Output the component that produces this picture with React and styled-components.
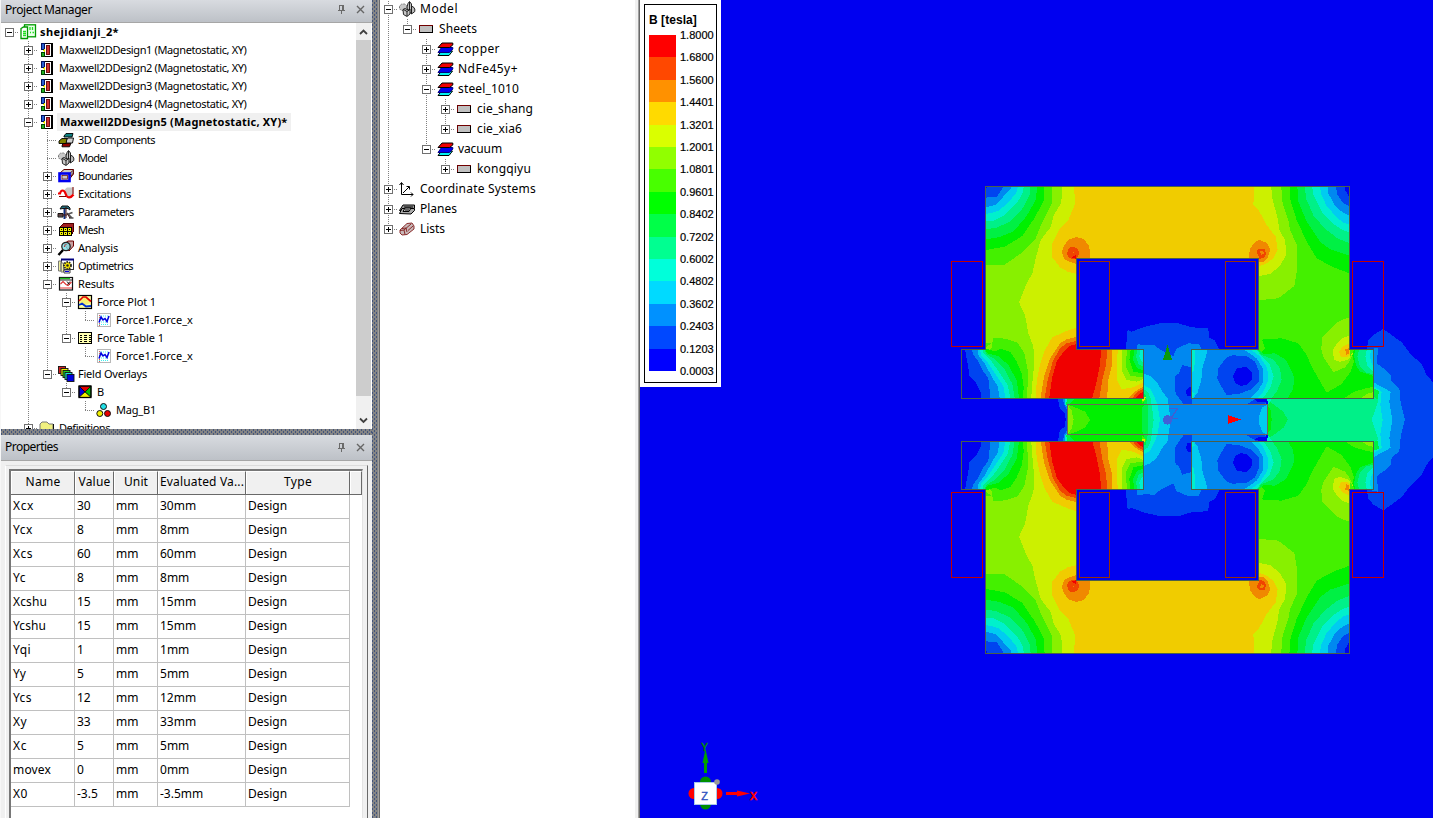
import React, { useLayoutEffect, useRef, useState } from "react";
import styled, { createGlobalStyle } from "styled-components";

const UI = `"Noto Sans", "Open Sans", "Liberation Sans", sans-serif`;
const ARIAL = `"Liberation Sans", Arial, sans-serif`;

const Global = createGlobalStyle`
  * { box-sizing: border-box; }
  html, body { margin: 0; padding: 0; overflow: hidden; background: #f0f0f0; }
  body { font-family: ${UI}; font-size: 12px; color: #000; }
`;

const dither = `
  background-color: #858585;
  background-image:
    conic-gradient(from 0deg at 1px 2px, transparent 270deg, #43557c 0),
    conic-gradient(from 0deg at 1px 2px, transparent 270deg, #43557c 0);
  background-size: 4px 4px;
  background-position: 0 0, 2px 2px;
`;

const Window = styled.div`
  display: flex;
  width: 1433px;
  height: 818px;
  overflow: hidden;
`;
const Dock = styled.div`
  display: flex;
  flex-direction: column;
  width: 372px;
  border-left: 1px solid #f7f7f7;
  flex: none;
`;
const Splitter = styled.div`
  flex: none;
  ${dither}
  ${(p) => (p.$vertical ? "width: 6px;" : "height: 6px;")}
`;
const Edge = styled.div`
  width: ${(p) => p.$w || 1}px;
  background: ${(p) => p.$c};
  flex: none;
`;
const TitleBar = styled.div`
  display: flex;
  align-items: center;
  flex: none;
  height: ${(p) => p.$h}px;
  padding: ${(p) => p.$top || 0}px 6px ${(p) => p.$bottom}px 4px;
  background: linear-gradient(#d8dbe0, #bdc1c7);
  border-bottom: 1px solid #a6a6a6;
  color: #1b1b1b;
`;
const Spacer = styled.div`flex: 1;`;
const TitleIcon = styled.svg`
  width: 11px;
  height: 11px;
  margin-left: 8px;
  flex: none;
`;
const TreePane = styled.div`
  display: flex;
  height: 406px;
  flex: none;
  background: #fff;
  overflow: hidden;
`;
const Tree = styled.div`
  flex: 1;
  min-width: 0;
  margin-left: -1px;
  margin-top: ${(p) => p.$shift || 0}px;
`;
const Row = styled.div`
  display: flex;
  align-items: center;
  height: ${(p) => p.$h}px;
`;
const vert = "repeating-linear-gradient(#808080 0 1px, transparent 1px 2px)";
const horiz = "repeating-linear-gradient(90deg, #808080 0 1px, transparent 1px 2px)";
const Guide = styled.div`
  width: 19px;
  height: 100%;
  flex: none;
  display: flex;
  align-items: center;
  padding: 1px 0 0 5px;
  background-repeat: no-repeat;
  background-image: ${(p) => (p.$k === " " ? "none" : p.$k === "|" ? vert : p.$k === "r" ? horiz : `${vert}, ${horiz}`)};
  background-size: ${(p) => (p.$k === "|" ? "1px 100%" : p.$k === "r" ? "10px 1px" : `1px ${p.$k === "L" ? "55%" : "100%"}, 10px 1px`)};
  background-position: ${(p) => (p.$k === "|" ? "9px 0" : p.$k === "r" ? "9px 55%" : "9px 0, 9px 55%")};
`;
const Box = styled.svg`
  width: 9px;
  height: 9px;
  flex: none;
`;
const IconBox = styled.svg`
  width: 17px;
  height: 16px;
  margin: 0 ${(p) => p.$gap}px 0 1px;
  flex: none;
  overflow: visible;
`;
const Label = styled.span`
  display: inline-block;
  white-space: pre;
  line-height: 16px;
  font-size: ${(p) => p.$size || 12}px;
  font-weight: ${(p) => (p.$bold ? 700 : 400)};
  color: ${(p) => p.$color || "#000"};
`;
const Selected = styled.span`
  display: flex;
  align-items: center;
  height: 18px;
  padding: 0 3px 0 3px;
  margin-left: -2px;
  background: #f0f0f0;
`;

function Fit({ w, children, ...rest }) {
  const ref = useRef(null);
  const [gap, setGap] = useState(0);
  useLayoutEffect(() => {
    const natural = ref.current.getBoundingClientRect().width;
    if (w) setGap((w - natural) / children.length);
  }, [w, children]);
  return (
    <Label ref={ref} style={{ letterSpacing: `${gap}px` }} {...rest}>
      {children}
    </Label>
  );
}

function Expander({ open }) {
  return (
    <Box viewBox="0 0 9 9" shapeRendering="crispEdges">
      <rect x="0.5" y="0.5" width="8" height="8" fill="#fff" stroke="#707070" />
      <path d={open ? "M2 4.5H7" : "M2 4.5H7M4.5 2V7"} stroke="#000" />
    </Box>
  );
}

const hex = (
  <g>
    <path d="M.5 5.500 2.500 3H6L8 5V9L6 9.500H3L.5 8Z" fill="#c8c8c8" stroke="#777" strokeDasharray="1.500 1" />
    <path d="M8 6 9 2.500 10.500 .5 12.500 3V12H9Z" fill="#c4c4c4" stroke="#111" strokeWidth="0.900" />
    <path d="M12.500 6 14 5.500 15.800 8V10.500L12.500 13Z" fill="#bdbdbd" stroke="#111" strokeWidth="0.900" />
    <path d="M4 8.500 6 7.500 9 9 11 8V13L8 15.500 4.500 13.500Z" fill="#c8c8c8" stroke="#111" strokeWidth="0.900" />
    <path d="M4.500 8.500 8 10.500V15M8 10.500 11 8.500M10.500 1V9" stroke="#111" strokeWidth="0.900" fill="none" />
  </g>
);
const layers = (
  <g strokeWidth="1">
    <path d="M1 14.500 4.500 10H15.500L12 14.500Z" fill="#00f0f0" stroke="#000" />
    <path d="M1 11.500 4.500 6.500H15.800V8L12.500 11.500Z" fill="#0000f0" stroke="#000080" />
    <path d="M1 6.500 5 2H15.800V4L12.500 6.500Z" fill="#f00000" stroke="#000" />
  </g>
);
const plotCurve = (
  <g>
    <rect x="1.500" y="1.500" width="13" height="13" fill="#fff" stroke="#b8b8b8" />
    <path d="M3 4H13M3 7H13M3 10H13M3 12.500H13" stroke="#40f0f0" strokeDasharray="1 1" />
    <path d="M3.500 3V14" stroke="#f05050" strokeDasharray="1 1" />
    <path d="M3 10.500 5 5 7 8 9 6.500 11 9.500 13 4" stroke="#0000e0" strokeWidth="1.500" fill="none" />
  </g>
);
const ICONS = {
  project: (
    <g stroke="#009a00" strokeWidth="1.300">
      <rect x="4.500" y="0.800" width="11" height="12" fill="#e8ffe8" />
      <path d="M1 4.500 3.500 3H7.500V14.500H1Z" fill="#fff" />
      <path d="M3 7.500H6M3 9.500H6M3 11.500H6M10 3V6M12.500 3V6M10 8.500H11M12.500 8.500H14" stroke="#20e020" />
    </g>
  ),
  design: (
    <g shapeRendering="crispEdges">
      <rect x="2" y="1" width="3" height="6" fill="#2860d0" stroke="#001060" />
      <rect x="2" y="10" width="3" height="4" fill="#20b020" stroke="#004000" />
      <path d="M3 9 6 6 7 10Z" fill="#f0f000" />
      <path d="M6 1.500H13.500V14.500H6" fill="#fff" stroke="#000" />
      <path d="M12.500 1V15" stroke="#000" />
      <rect x="7.500" y="3.500" width="3" height="9" fill="#d03030" stroke="#701010" />
    </g>
  ),
  comps: (
    <g stroke="#000" strokeWidth="0.900">
      <path d="M6 4 8 1.500H15L14 5H6Z" fill="#108080" />
      <path d="M4 14 5 11H13L11.500 14.800H4Z" fill="#900000" />
      <path d="M8 11V8.500L10 6H15.500L14.500 11Z" fill="#d0d0d0" />
      <path d="M1 11.500V9L4 6.500H9L8 11.500Z" fill="#808000" />
    </g>
  ),
  model: hex,
  boundary: (
    <g>
      <path d="M2 5 6 1.500H15.500V6L11.500 11" fill="#c8c8c8" stroke="#600000" />
      <path d="M13 8 15.500 5V2L11 6Z" fill="#999" stroke="#600000" strokeWidth="0.800" />
      <rect x="1.500" y="5.500" width="10" height="7.500" fill="#e0e0e0" stroke="#0000f0" strokeWidth="2.600" />
      <rect x="4" y="7.500" width="5.500" height="3.500" fill="#c8c8c8" stroke="#600000" strokeWidth="0.700" />
    </g>
  ),
  excite: (
    <g>
      <path d="M5 5 9 1.500H15.500V9L12 12.500 9 9Z" fill="#c8c8c8" />
      <path d="M0 7.500H2C3 3.500 6 3.500 7.500 7.500 9 12.500 12.500 12.500 15.500 8.500" fill="none" stroke="#f00000" strokeWidth="2.200" />
      <path d="M1 10.500H8M15 1V8" stroke="#800000" />
    </g>
  ),
  params: (
    <g stroke="#111">
      <path d="M2 5 4 2H10L12 4V6L10 4.500H5Z" fill="#207080" />
      <path d="M6.500 5V15" stroke="#103080" strokeWidth="2" />
      <path d="M0 9.500H5V13H0Z" fill="#777" />
      <path d="M9 9 14 14M10.500 10 14.500 8.500M11 14H15.500" strokeWidth="1.700" stroke="#555" />
      <path d="M8 3V14M0 11H9M9 9.500 12 14" stroke="#401010" />
    </g>
  ),
  mesh: (
    <g shapeRendering="crispEdges">
      <path d="M2 5 6 1H15V10L13 13" fill="#a02020" stroke="#500000" />
      <rect x="1" y="5" width="13" height="9" fill="#f0f000" />
      <path d="M1.500 5V14M5.500 5V14M9.500 5V14M13.500 5V14M1 5.500H14M1 9.500H14M1 13.500H14" stroke="#000" fill="none" />
      <path d="M3 7H4V8H3ZM7 7H8V8H7ZM11 7H12V8H11ZM3 11H4V12H3ZM7 11H8V12H7ZM11 11H12V12H11Z" fill="#000" />
    </g>
  ),
  analysis: (
    <g>
      <path d="M6 4 10 1H15.500V6L11 11Z" fill="#c8a0a0" stroke="#700000" />
      <circle cx="8" cy="6.500" r="4.200" fill="#80e0e8" fillOpacity="0.800" stroke="#222" strokeWidth="1.300" />
      <path d="M5 10 0.500 15" stroke="#000" strokeWidth="2.500" />
      <path d="M6.500 7A2 2 0 0 1 8.500 4.500" stroke="#b03030" fill="none" />
    </g>
  ),
  opti: (
    <g>
      <rect x="3.500" y="1.500" width="12" height="10" fill="#fff" stroke="#333" />
      <path d="M3 1.500H16" stroke="#000080" strokeWidth="2" />
      <path d="M.5 3H3V13H.5ZM3 5H5.500V14H3Z" fill="#f0f0a0" stroke="#777" />
      <circle cx="9.500" cy="7.500" r="3.500" fill="#f0e000" stroke="#222" strokeDasharray="1.500 1" strokeWidth="1.800" />
      <circle cx="9.500" cy="7.500" r="1.200" fill="#222" />
      <path d="M6 12H12V15H6Z" fill="#fff" stroke="#444" />
      <path d="M7 13.500H11" stroke="#0000e0" />
    </g>
  ),
  results: (
    <g>
      <rect x="1.500" y="1.500" width="13" height="12.500" fill="#fff" stroke="#111" strokeWidth="1.200" />
      <path d="M2 2.500H12" stroke="#20c020" strokeWidth="1.400" />
      <path d="M2 4H14" stroke="#111" strokeWidth="0.900" />
      <path d="M2.500 8 5 5.500 8 8.500 10 9.500 13.500 6" stroke="#e03030" fill="none" strokeWidth="1.100" />
      <path d="M9 5.500 11.500 8.500M12 5.500 9.500 8.500" stroke="#111" />
      <path d="M2 12H14" stroke="#e03030" />
    </g>
  ),
  plot: (
    <g>
      <rect x="1.500" y="1.500" width="13" height="13" fill="#ffffa0" stroke="#000" strokeWidth="1.200" />
      <path d="M4 6 8 3 12 6 14 9 8 11 3 9Z" fill="#f8f070" />
      <path d="M2 7 6 3H9L14 7.500" stroke="#e00000" fill="none" strokeWidth="1.700" />
      <path d="M2 11 5 9.500 9 12.500 14 12" stroke="#0030d0" fill="none" strokeWidth="1.900" />
    </g>
  ),
  curve: plotCurve,
  table: (
    <g shapeRendering="crispEdges">
      <rect x="1.500" y="2.500" width="13" height="11" fill="#ffffb0" stroke="#000" />
      <path d="M5.500 3V13M10.500 3V13M3 5.500H5M3 7.500H5M3 9.500H5M3 11.500H5M7 5.500H10M7 7.500H10M7 9.500H10M7 11.500H10M12 5.500H14M12 7.500H14M12 9.500H14M12 11.500H14" stroke="#000" />
      <path d="M5.500 3V13M10.500 3V13" stroke="#ffffb0" />
    </g>
  ),
  overlays: (
    <g stroke="#111" strokeWidth="0.900">
      <rect x="0.500" y="0.500" width="7" height="7" fill="#d02020" />
      <rect x="3" y="2.500" width="7" height="7" fill="#f0f000" />
      <rect x="5" y="4.500" width="7" height="7" fill="#20d020" />
      <rect x="7" y="6.500" width="7" height="7" fill="#20e0e0" />
      <rect x="9" y="8.500" width="7" height="7" fill="#0000e0" />
    </g>
  ),
  field: (
    <g stroke="#000" strokeWidth="0.700">
      <path d="M2 2H14L8 8Z" fill="#e00000" />
      <path d="M2 2V13L8 8Z" fill="#0000e0" />
      <path d="M14 2V13L8 8Z" fill="#00c000" />
      <path d="M2 13.500H14L8 8Z" fill="#f0f000" />
      <rect x="2" y="2" width="12" height="11.500" fill="none" strokeWidth="1.300" />
    </g>
  ),
  dots: (
    <g stroke="#111">
      <circle cx="7.500" cy="4.500" r="3" fill="#20e0e8" />
      <circle cx="3.800" cy="11.500" r="3" fill="#f0f000" />
      <circle cx="11.500" cy="11.500" r="3" fill="#e80000" />
    </g>
  ),
  folder: (
    <g>
      <path d="M1 15V4L3 2H8L10 4H14V15Z" fill="#f0f080" stroke="#777" />
      <path d="M14.500 4V15" stroke="#111" />
    </g>
  ),
  sheet: (
    <g shapeRendering="crispEdges">
      <rect x="1.500" y="4.500" width="13" height="7" fill="#c0c0c0" stroke="#000" />
      <path d="M1 4.500H15M1.500 4V11" stroke="#700000" />
    </g>
  ),
  layers,
  axes: (
    <g stroke="#000" fill="none">
      <path d="M2.500 2V13.500H14M.5 4 2.500 1.500 4.500 4M12 11.500 14 13.500 12 15.500M4 12 10 6M7.500 5.500H10.500V8.500" />
    </g>
  ),
  planes: (
    <g stroke="#000">
      <path d="M.5 9.500 4 4H15.500V7L12 10Z" fill="#999" />
      <path d="M.5 12.500 3 7.500H15.500V9.500L12 13Z" fill="#aaa" />
      <path d="M4 10.500 6 7H12L10 10.500ZM5 6H14M6 9H10" fill="#ccc" />
    </g>
  ),
  lists: (
    <g stroke="#801818" strokeWidth="0.900">
      <path d="M1 12V9L8 2.500 13 2 15 5V8L8 13.500 3 14Z" fill="#c8b8b8" />
      <path d="M1 9.500 5 9 6 13.500M5 9 12 3M3 7.500 7 7 8 11M9 9.500 14 5" fill="none" />
    </g>
  ),
};

function Icon({ name, gap }) {
  return <IconBox viewBox="0 0 17 16" $gap={gap}>{ICONS[name]}</IconBox>;
}

// guides: " " blank, "|" pass-through, "+" branch, "L" last branch, "r" root
const PROJECT = [
  ["r", "-", "project", "shejidianji_2*", 79, true],
  [" +", "+", "design", "Maxwell2DDesign1 (Magnetostatic, XY)", 187.500],
  [" +", "+", "design", "Maxwell2DDesign2 (Magnetostatic, XY)", 187.500],
  [" +", "+", "design", "Maxwell2DDesign3 (Magnetostatic, XY)", 187.500],
  [" +", "+", "design", "Maxwell2DDesign4 (Magnetostatic, XY)", 187.500],
  [" +", "-", "design", "Maxwell2DDesign5 (Magnetostatic, XY)*", 227.500, true, true],
  [" |+", "", "comps", "3D Components", 77],
  [" |+", "", "model", "Model", 29],
  [" |+", "+", "boundary", "Boundaries", 54],
  [" |+", "+", "excite", "Excitations", 53],
  [" |+", "+", "params", "Parameters", 56],
  [" |+", "+", "mesh", "Mesh", 26],
  [" |+", "+", "analysis", "Analysis", 40],
  [" |+", "+", "opti", "Optimetrics", 55],
  [" |+", "-", "results", "Results", 36],
  [" ||+", "-", "plot", "Force Plot 1", 59],
  [" |||L", "", "curve", "Force1.Force_x", 77],
  [" ||L", "-", "table", "Force Table 1", 67],
  [" || L", "", "curve", "Force1.Force_x", 77],
  [" |L", "-", "overlays", "Field Overlays", 69],
  [" | L", "-", "field", "B", 7],
  [" |  L", "", "dots", "Mag_B1", 40],
  [" L", "+", "folder", "Definitions", 51],
];
const MODEL = [
  ["+", "-", "model", "Model", 38],
  ["|L", "-", "sheet", "Sheets", 38],
  ["| +", "+", "layers", "copper", 42],
  ["| +", "+", "layers", "NdFe45y+", 60],
  ["| +", "-", "layers", "steel_1010", 61],
  ["| |+", "+", "sheet", "cie_shang", 56],
  ["| |L", "+", "sheet", "cie_xia6", 45],
  ["| L", "-", "layers", "vacuum", 44],
  ["|  L", "+", "sheet", "kongqiyu", 54],
  ["+", "+", "axes", "Coordinate Systems", 116],
  ["+", "+", "planes", "Planes", 37],
  ["L", "+", "lists", "Lists", 25],
];

function TreeRow({ item, h, size, gap }) {
  const [guides, exp, icon, text, w, bold, selected] = item;
  const label = (
    <Fit w={w} $size={size} $bold={bold}>
      {text}
    </Fit>
  );
  return (
    <Row $h={h}>
      {guides.split("").map((k, i) => (
        <Guide key={i} $k={k}>
          {exp && i === guides.length - 1 ? <Expander open={exp === "-"} /> : null}
        </Guide>
      ))}
      <Icon name={icon} gap={gap} />
      {selected ? <Selected>{label}</Selected> : label}
    </Row>
  );
}

const ScrollBar = styled.div`
  display: flex;
  flex-direction: column;
  width: 15px;
  margin-right: 1px;
  background: #f0f0f0;
  flex: none;
`;
const Arrow = styled.svg`
  width: 15px;
  height: 17px;
  flex: none;
`;
const Thumb = styled.div`
  height: 356px;
  background: #cdcdcd;
`;

const PropsPane = styled.div`
  flex: 1;
  padding: 4px 4px 0 4px;
  background: #f0f0f0;
`;
const Frame = styled.div`
  height: 100%;
  padding: 3px 4px 0 3px;
  border: solid;
  border-width: 1px 1px 0 1px;
  border-color: #dcdcdc #696969 #fff #fff;
`;
const Sheet = styled.div`
  height: 100%;
  border: solid;
  border-width: 2px 1px 0 2px;
  border-color: #777 #e3e3e3 #fff #777;
  background: #fff;
`;
const GridRow = styled.div`
  display: grid;
  grid-template-columns: 64px 39px 44px 88px 104px 1fr;
  height: 24px;
  ${(p) => p.$head && "border-bottom: 1px solid #696969;"}
`;
const HeadCell = styled.div`
  display: flex;
  align-items: center;
  justify-content: center;
  padding-bottom: 2px;
  white-space: nowrap;
  overflow: hidden;
  background: #f0f0f0;
  border-right: 1px solid #696969;
  border-left: 1px solid #fff;
  border-top: 1px solid #fff;
`;
const Cell = styled.div`
  display: flex;
  align-items: center;
  padding: 0 0 1px 2px;
  border-right: 1px solid #c0c0c0;
  border-bottom: 1px solid #c0c0c0;
`;

const HEAD = [["Name", 35], ["Value", 32], ["Unit", 24], ["Evaluated Va...", 84], ["Type", 28]];
const DATA = [
  ["Xcx", "30", 21], ["Ycx", "8", 20], ["Xcs", "60", 20], ["Yc", "8", 13], ["Xcshu", "15", 34],
  ["Ycshu", "15", 33], ["Yqi", "1", 18], ["Yy", "5", 13], ["Ycs", "12", 19], ["Xy", "33", 14],
  ["Xc", "5", 14], ["movex", "0", 38], ["X0", "-3.5", 15],
];

function PinClose() {
  return (
    <>
      <TitleIcon viewBox="0 0 11 11" shapeRendering="crispEdges">
        <path d="M3.500 6V1.500H7.500V6M6.500 2V6M2 6.500H9M5.500 7V10" stroke="#6a6a6a" fill="none" />
      </TitleIcon>
      <TitleIcon viewBox="0 0 11 11">
        <path d="M2 2 9 9M9 2 2 9" stroke="#666" strokeWidth="1.400" />
      </TitleIcon>
    </>
  );
}

const ModelPane = styled.div`
  width: 255px;
  flex: none;
  background: #fff;
  overflow: hidden;
`;

const Viewport = styled.div`
  flex: 1;
  position: relative;
  background: #0000f0;
`;
const Scene = styled.svg`
  display: block;
  width: 793px;
  height: 818px;
`;
const Legend = styled.div`
  position: absolute;
  left: 0;
  top: 0;
  width: 81px;
  height: 387px;
  padding: 4px;
  background: #fff;
`;
const LegendBox = styled.div`
  width: 73px;
  height: 379px;
  border: 1px solid #000;
  padding: 8px 0 0 4px;
  font-family: ${ARIAL};
`;
const LegendTitle = styled.div`
  font: bold 12px/14px ${ARIAL};
  letter-spacing: 0.05px;
  height: 22px;
`;
const LegendBody = styled.div`
  display: flex;
`;
const Ramp = styled.div`
  width: 27px;
  height: 336px;
  display: flex;
  flex-direction: column;
`;
const Swatch = styled.div`
  flex: 1;
  background: ${(p) => p.$c};
`;
const Ticks = styled.div`
  margin: -11px 0 0 4px;
  font: 11px/22.400px ${ARIAL};
  color: #000;
  -webkit-text-stroke: 0.2px #000;
`;

const RAMP = ["#ff0000", "#ff4800", "#ff9100", "#ffda00", "#daff00", "#91ff00", "#48ff00", "#00ff00", "#00ff48", "#00ff91", "#00ffda", "#00daff", "#0091ff", "#0048ff", "#0000ff"];
const TICKS = ["1.8000", "1.6800", "1.5600", "1.4401", "1.3201", "1.2001", "1.0801", "0.9601", "0.8402", "0.7202", "0.6002", "0.4802", "0.3602", "0.2403", "0.1203", "0.0003"];

// flux density bands, low to high
const C = ["#0000f0", "#0044f0", "#0088f0", "#00ccf0", "#00f0cc", "#00f088", "#00f044", "#00f000", "#44f000", "#88f000", "#ccf000", "#f0cc00", "#f08800", "#f04400", "#f00000"];

const Bands = ({ list }) => list.map(([c, points], i) => <polygon key={i} fill={C[c]} points={points} />);

const CORE_LEFT = [
  [9, "40,0 800,0 800,720 40,720"],
  [10, "352,0 352,40 347,72 325,108 318,140 287,180 272,235 262,280 245,310 222,367 240,405 250,460 265,500 268,545 262,610 258,660 800,660 800,0"],
  [11, "388,0 389,75 370,120 342,150 322,190 322,232 345,262 370,276 397,282 800,282 800,0"],
  [11, "397,442 365,453 322,472 300,510 285,555 275,605 272,660 800,660 800,508 397,508"],
  [8, "100,0 322,0 320,70 290,130 270,180 235,215 178,255 100,255"],
  [7, "100,0 300,0 296,62 270,112 232,168 180,200 100,214"],
  [6, "100,0 279,0 272,60 245,108 205,155 160,172 100,182"],
  [5, "100,0 259,0 254,45 230,90 195,125 155,143 100,152"],
  [4, "100,0 240,0 232,42 215,70 180,105 145,122 100,127"],
  [3, "100,0 221,0 216,35 190,68 160,92 135,100 100,103"],
  [2, "100,0 204,0 196,28 175,50 152,74 130,80 100,80"],
  [1, "100,0 176,0 174,22 155,52 100,53"],
  [0, "100,0 127,0 127,24 100,24"],
  [8, "40,490 142,490 145,474 182,476 218,488 238,520 248,570 248,610 246,660 40,660"],
  [9, "121,505 140,488 142,500 132,512 124,515"],
  [7, "40,500 122,505 150,515 165,506 195,515 215,545 230,580 236,620 234,660 40,660"],
  [6, "40,500 118,505 128,520 160,528 190,555 215,600 223,660 40,660"],
  [5, "40,500 115,505 125,523 150,538 180,570 202,612 210,660 40,660"],
  [4, "40,500 112,505 115,520 140,545 165,580 188,615 197,660 40,660"],
  [3, "40,500 105,505 108,525 130,550 155,588 175,618 182,660 40,660"],
  [2, "40,500 98,505 100,525 122,555 140,590 158,618 165,660 40,660"],
  [1, "40,500 79,505 86,525 100,545 112,570 130,595 137,660 40,660"],
  [0, "40,500 60,505 64,530 70,560 72,588 92,608 108,640 108,660 40,660"],
  [12, "397,470 365,478 345,490 315,535 297,590 286,660 486,660 490,600 500,560 502,500"],
  [13, "397,482 365,490 345,505 323,545 308,600 298,660 462,660 472,600 484,550 486,500"],
  [14, "397,492 372,498 350,523 335,545 322,590 312,660 440,660 455,605 464,560 470,500"],
  [10, "518,500 516,600 530,628 565,622 600,605 600,500"],
  [9, "532,500 530,570 545,600 575,605 600,595 600,500"],
  [8, "546,500 543,560 556,588 600,592 600,500"],
  [7, "558,500 553,540 565,575 600,582 600,500"],
  [6, "570,500 564,540 577,565 600,572 600,500"],
  [5, "579,500 573,530 582,555 600,560 600,500"],
  [4, "587,500 583,530 590,545 600,547 600,500"],
  [12, "543,660 572,633 600,618 600,660"],
  [13, "556,660 580,634 600,625 600,660"],
  [14, "568,660 582,643 600,632 600,660"],
  [12, "395,171 415,177 431,195 435,212 435,240 397,240 393,251 375,246 358,237 350,216 358,195 372,178"],
  [13, "378,201 395,203 402,216 400,228 390,238 372,234 366,222 370,208"],
  [14, "380,232 392,226 392,236"],
  [12, "384,215 388,215 388,220 384,220"],
];
const CORE_RIGHT = [
  [8, "78,0 660,0 660,720 78,720"],
  [9, "-250,0 362,0 368,70 385,120 390,150 411,195 411,270 403,318 355,355 290,361 -250,361"],
  [10, "-250,0 331,0 338,60 352,110 358,150 376,182 378,225 360,258 330,282 290,290 -250,290"],
  [11, "-250,0 284,0 280,75 297,92 320,135 347,170 353,210 340,235 320,250 290,262 -250,262"],
  [7, "387,0 392,65 410,120 440,185 470,235 520,262 580,284 580,0"],
  [6, "411,0 415,65 440,125 480,185 510,208 580,230 580,0"],
  [5, "433,0 438,55 462,110 500,150 535,177 580,193 580,0"],
  [4, "454,0 460,45 485,95 515,128 545,148 580,163 580,0"],
  [3, "478,0 483,42 500,78 530,112 550,128 580,138 580,0"],
  [2, "501,0 505,40 525,78 548,97 580,112 580,0"],
  [1, "528,0 530,40 548,68 580,85 580,0"],
  [0, "555,0 555,30 566,48 580,48 580,0"],
  [12, "288,184 300,180 322,190 331,210 322,236 310,246 290,245 290,240 266,240 270,205"],
  [13, "290,214 298,206 314,208 318,222 311,235 298,236"],
  [12, "300,214 309,213 312,220 304,224"],
  [7, "300,490 310,478 365,475 415,490 440,525 455,560 475,595 500,638 545,612 572,575 582,545 570,500 660,500 660,660 80,660 80,500 296,500"],
  [8, "296,500 306,478 315,505 305,515 296,518"],
  [8, "545,660 580,636 610,627 660,615 660,660"],
  [9, "595,660 620,642 660,630 660,660"],
  [6, "80,500 290,500 310,522 345,520 378,540 392,568 402,590 400,625 380,660 80,660"],
  [5, "80,500 285,500 305,525 340,538 360,565 365,600 350,635 330,660 80,660"],
  [4, "80,500 280,500 305,528 330,555 341,590 330,625 305,660 80,660"],
  [3, "80,500 262,500 300,530 322,565 325,600 310,635 288,660 80,660"],
  [2, "80,500 240,500 290,535 308,565 310,605 292,635 265,660 80,660"],
  [1, "200,532 218,526 260,528 285,545 297,575 296,605 275,628 235,642 200,645 183,618 172,595 175,565 190,545"],
  [0, "232,563 260,562 275,578 275,598 262,613 242,618 225,608 219,588"],
  [3, "80,500 145,500 138,530 128,560 124,600 112,640 95,660 80,660"],
  [4, "80,500 105,500 105,545 100,575 80,580"],
  [4, "80,630 105,640 95,660 80,660"],
  [9, "580,410 550,418 530,428 510,450 486,472 484,508 490,530 520,577 555,562 568,545 580,520"],
  [10, "580,464 548,474 530,492 518,510 522,540 540,546 565,538 578,520"],
  [11, "580,484 548,500 537,515 542,530 560,532 578,518"],
  [12, "556,508 566,505 568,520 558,525"],
  [8, "570,505 590,500 577,520 570,530"],
  [6, "590,500 582,525 588,555 600,575 660,595 660,500"],
  [5, "600,500 592,530 600,560 620,578 660,588 660,500"],
  [4, "622,500 616,530 622,558 636,573 660,575 660,500"],
  [3, "634,500 630,530 636,555 660,560 660,500"],
];
const AIR_MID = [
  [1, "0,150 5,90 8,60 20,65 60,50 110,39 160,40 200,52 250,55 252,83 270,92 284,120 284,330 0,330"],
  [2, "30,140 38,102 60,106 88,104 100,115 118,125 145,138 155,115 190,100 222,102 232,125 420,250 428,330 30,330"],
  [3, "50,188 75,198 95,215 112,245 128,265 137,330 0,330"],
  [4, "50,222 75,235 88,260 97,283 105,330 0,330"],
  [5, "50,235 68,245 76,262 80,283 86,330 0,330"],
  [6, "50,246 62,255 68,283 70,330 0,330"],
  [7, "50,262 58,283 48,300 40,330 -170,330 -180,270"],
  [8, "0,262 55,262 65,268 50,283 -10,272"],
  [10, "40,262 62,262 58,272 45,272"],
  [1, "172,164 182,168 200,172 200,283 175,282 152,250 149,225 152,195 162,190"],
  [0, "200,230 190,233 183,243 186,258 200,260"],
  [1, "365,283 392,266 430,264 420,283"],
  [0, "388,268 430,264 424,277 398,276"],
  [3, "428,284 412,292 403,315 402,330 430,330"],
];
const AIR_LEFT = [
  [1, "338,650 344,685 360,700 362,720 368,720 368,650"],
  [2, "352,650 358,675 367,690 375,650"],
  [4, "358,650 362,678 375,672 375,650"],
  [7, "368,720 368,674 372,665 385,656 590,656 590,720"],
  [6, "366,650 364,674 372,674 390,654"],
  [8, "368,674 395,684 420,695 436,720 368,720"],
  [9, "368,676 380,692 386,720 368,720"],
];
const AIR_RIGHT = [
  [1, "618,520 625,482 640,465 670,447 725,487 750,520 785,553 800,585 820,608 820,720 600,720"],
  [2, "630,508 655,503 650,550 675,568 692,585 695,605 718,625 722,668 735,720 600,720"],
  [3, "630,600 660,618 692,635 688,665 697,720 600,720"],
  [4, "630,610 665,635 661,675 668,720 600,720"],
  [6, "630,622 656,632 655,655 635,670 600,720"],
  [5, "323,720 323,652 640,650 655,660 642,700 634,720"],
  [4, "318,650 325,672 340,650"],
  [6, "323,675 330,666 350,680 370,695 384,720 323,720"],
  [7, "323,678 332,690 335,720 323,720"],
];

const CORE_TOP = "M985.5 186.5H1349.5V349.5H1373.5V398.5H1191.5V349.5H1258.5V258.5H1076.5V349.5H1143.5V398.5H961.5V349.5H985.5Z";
const CORE_BOTTOM = "M985.5 653.5H1349.5V489.5H1373.5V441.5H1191.5V489.5H1258.5V580.5H1076.5V489.5H1143.5V441.5H961.5V489.5H985.5Z";

function AirHalf() {
  return (
    <>
      <g transform="translate(1125 310) scale(.33333)"><Bands list={AIR_MID} /></g>
      <g transform="translate(945 180) scale(.33333)"><Bands list={AIR_LEFT} /></g>
      <g transform="translate(1160 180) scale(.33333)"><Bands list={AIR_RIGHT} /></g>
    </>
  );
}
function CoreHalf({ id }) {
  return (
    <>
      <g clipPath={`url(#left-${id})`}>
        <g transform="translate(945 180) scale(.33333)"><Bands list={CORE_LEFT} /></g>
      </g>
      <g clipPath={`url(#right-${id})`}>
        <g transform="translate(1160 180) scale(.33333)"><Bands list={CORE_RIGHT} /></g>
      </g>
    </>
  );
}

function FieldScene() {
  return (
    <Scene viewBox="640 0 793 818" shapeRendering="crispEdges">
      <defs>
        <clipPath id="core-top"><path d={CORE_TOP} /></clipPath>
        <clipPath id="core-bottom"><path d={CORE_BOTTOM} /></clipPath>
        {["a", "b"].map((k) => (
          <React.Fragment key={k}>
            <clipPath id={`left-${k}`}><rect x="940" y="170" width="227" height="240" /></clipPath>
            <clipPath id={`right-${k}`}><rect x="1167" y="170" width="230" height="240" /></clipPath>
          </React.Fragment>
        ))}
      </defs>
      <AirHalf />
      <g transform="translate(0 839.5) scale(1 -1)"><AirHalf /></g>
      <g clipPath="url(#core-top)"><CoreHalf id="a" /></g>
      <g clipPath="url(#core-bottom)">
        <g transform="translate(0 839) scale(1 -1)"><CoreHalf id="b" /></g>
      </g>
      <rect x="1077" y="259" width="181" height="64" fill={C[0]} />
      <rect x="1077" y="516" width="181" height="64" fill={C[0]} />

      <g fill="none">
        <path d={CORE_TOP} stroke="#4a5f4a" />
        <path d={CORE_BOTTOM} stroke="#4a5f4a" />
        <rect x="1067.500" y="404.500" width="200" height="30" stroke="#6e665c" />
        {[261.5, 492.5].map((y) => (
          <g key={y}>
            <rect x="951.500" y={y} width="31" height="85" stroke="#c00000" />
            <rect x="1352.500" y={y} width="31" height="85" stroke="#c00000" />
            <rect x="1079.500" y={y} width="30" height="85" stroke="#963008" />
            <rect x="1225.500" y={y} width="30" height="85" stroke="#963008" />
          </g>
        ))}
      </g>

      <path d="M1167.500 345 1172 360H1163Z" fill="#0a9a0a" />
      <path d="M1228 415 1241 419.500 1228 424Z" fill="#ff0000" />
      <path d="M1169 408.500H1177.500L1171 418.500H1178" stroke="#4060d0" strokeWidth="1.500" fill="none" />
      <circle cx="1167.500" cy="420" r="4.700" fill="#4060d8" />

      <g shapeRendering="auto">
        <path d="M705.500 773V757" stroke="#00a000" strokeWidth="3" />
        <path d="M705.500 749 708.500 763H702.500Z" fill="#00a000" />
        <circle cx="705.500" cy="782" r="5.500" fill="#009000" />
        <circle cx="705.500" cy="804" r="5.500" fill="#009000" />
        <circle cx="694" cy="793.500" r="5.500" fill="#ff0000" />
        <circle cx="717" cy="793.500" r="5.500" fill="#ff0000" />
        <path d="M726 793.500H740" stroke="#ff0000" strokeWidth="3" />
        <path d="M737 790.500 750 793.500 737 796.500Z" fill="#ff0000" />
        <rect x="694.500" y="782.500" width="22" height="22" fill="#fff" stroke="#a8c8e8" />
        <circle cx="717" cy="782" r="2.800" fill="#999" />
        <text x="704.500" y="750.500" textAnchor="middle" fontFamily="Liberation Sans, sans-serif" fontSize="10" fill="#009000" stroke="#009000" strokeWidth="0.500">Y</text>
        <text x="704.500" y="800" textAnchor="middle" fontFamily="Liberation Sans, sans-serif" fontSize="11" fill="#3050c0" stroke="#3050c0" strokeWidth="0.400">Z</text>
        <text x="753.500" y="800" textAnchor="middle" fontFamily="Liberation Sans, sans-serif" fontSize="10.500" fill="#ff0000" stroke="#ff0000" strokeWidth="0.700">X</text>
      </g>
    </Scene>
  );
}

export default function App() {
  return (
    <Window>
      <Global />
      <Dock>
        <TitleBar $h={23} $bottom={3}>
          <Fit w={87}>Project Manager</Fit>
          <Spacer />
          <PinClose />
        </TitleBar>
        <TreePane>
          <Tree>
            {PROJECT.map((item, i) => (
              <TreeRow key={i} item={item} h={18} size={11} gap={3} />
            ))}
          </Tree>
          <ScrollBar>
            <Arrow viewBox="0 0 15 17"><path d="M4 11 7.500 7.500 11 11" stroke="#404040" strokeWidth="1.800" fill="none" /></Arrow>
            <Thumb />
            <Spacer />
            <Arrow viewBox="0 0 15 17"><path d="M4 6.500 7.500 10 11 6.500" stroke="#404040" strokeWidth="1.800" fill="none" /></Arrow>
          </ScrollBar>
        </TreePane>
        <Splitter />
        <TitleBar $h={26} $top={1} $bottom={2}>
          <Fit w={53}>Properties</Fit>
          <Spacer />
          <PinClose />
        </TitleBar>
        <PropsPane>
          <Frame>
            <Sheet>
              <GridRow $head>
                {HEAD.map(([t, w]) => (
                  <HeadCell key={t}><Fit w={w}>{t}</Fit></HeadCell>
                ))}
                <HeadCell />
              </GridRow>
              {DATA.map(([name, value, w]) => (
                <GridRow key={name}>
                  <Cell><Fit w={w}>{name}</Fit></Cell>
                  <Cell><Label>{value}</Label></Cell>
                  <Cell><Label>mm</Label></Cell>
                  <Cell><Label>{value}mm</Label></Cell>
                  <Cell><Label>Design</Label></Cell>
                </GridRow>
              ))}
            </Sheet>
          </Frame>
        </PropsPane>
      </Dock>
      <Splitter $vertical />
      <Edge $c="#a0a0a0" />
      <Edge $c="#696969" />
      <ModelPane>
        <Tree $shift={-1}>
          {MODEL.map((item, i) => (
            <TreeRow key={i} item={item} h={20} size={12} gap={4} />
          ))}
        </Tree>
      </ModelPane>
      <Edge $w={3} $c="#f0f0f0" />
      <Edge $c="#a0a0a0" />
      <Edge $c="#696969" />
      <Viewport>
        <FieldScene />
        <Legend>
          <LegendBox>
            <LegendTitle>B [tesla]</LegendTitle>
            <LegendBody>
              <Ramp>{RAMP.map((c) => <Swatch key={c} $c={c} />)}</Ramp>
              <Ticks>{TICKS.map((t) => <div key={t}>{t}</div>)}</Ticks>
            </LegendBody>
          </LegendBox>
        </Legend>
      </Viewport>
    </Window>
  );
}
